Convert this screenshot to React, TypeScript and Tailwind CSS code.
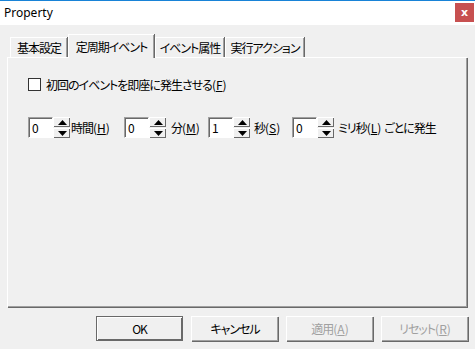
import type { ReactNode } from 'react';

// ── Classic Win32 pieces ─────────────────────────────────────────────────────

const jp = "[font-family:'Noto_Sans_CJK_JP','Noto_Sans',sans-serif] [font-feature-settings:'palt'] tracking-[-1px]";

// "(X)" accelerator part, Latin, normal spacing
function Acc({ k }: { k: string }) {
  return (
    <span className="tracking-normal">
      (<span className="underline">{k}</span>)
    </span>
  );
}

function Tab({ label, active, w }: { label: string; active?: boolean; w: string }) {
  if (active) {
    return (
      <div className={`relative z-10 -mb-[1px] flex h-[24px] items-center justify-center border-l border-t border-white bg-[#f0f0f0] shadow-[1px_0_0_#696969,inset_-1px_0_0_#a0a0a0] ${w}`}>
        <span className="text-[12px] leading-none text-black">{label}</span>
      </div>
    );
  }
  return (
    <div className={`flex h-[20px] items-center justify-center border-l border-t border-white bg-[#f0f0f0] shadow-[1px_0_0_#696969,inset_-1px_0_0_#a0a0a0] ${w}`}>
      <span className="text-[12px] leading-none text-black">{label}</span>
    </div>
  );
}

function Arrow({ up }: { up?: boolean }) {
  return (
    <svg width="9" height="5" viewBox="0 0 9 5" className="block">
      {up ? <path d="M0 5 L4.5 0 L9 5 Z" fill="#000" /> : <path d="M0 0 L4.5 5 L9 0 Z" fill="#000" />}
    </svg>
  );
}

function Spin({ value }: { value: string }) {
  return (
    <div className="flex h-[21px]">
      <div className="flex w-[25px] items-center border border-b-white border-l-[#a0a0a0] border-r-white border-t-[#a0a0a0] bg-white pl-[3px] shadow-[inset_1px_1px_0_#696969]">
        <span className="text-[12px] leading-none tracking-normal text-black">{value}</span>
      </div>
      <div className="flex w-[17px] flex-col">
        <div className="flex h-[10px] items-center justify-center border-l border-t border-white bg-[#f0f0f0] shadow-[inset_-1px_-1px_0_#696969]">
          <Arrow up />
        </div>
        <div className="h-[1px]" />
        <div className="flex h-[10px] items-center justify-center border-l border-t border-white bg-[#f0f0f0] shadow-[inset_-1px_-1px_0_#696969]">
          <Arrow />
        </div>
      </div>
    </div>
  );
}

function Btn({ children, primary, disabled }: { children: ReactNode; primary?: boolean; disabled?: boolean }) {
  return (
    <div
      className={
        primary
          ? 'flex h-[25px] w-[87px] items-center justify-center border border-[#696969] bg-[#f0f0f0] shadow-[inset_1px_1px_0_#fff,inset_-1px_-1px_0_#696969]'
          : 'flex h-[25px] w-[87px] items-center justify-center border-l border-t border-white bg-[#f0f0f0] shadow-[inset_-1px_-1px_0_#a0a0a0,1px_1px_0_#696969]'
      }
    >
      <span className={disabled ? 'text-[12px] leading-none text-[#a0a0a0]' : 'text-[12px] leading-none text-black'}>
        {children}
      </span>
    </div>
  );
}

export default function App() {
  return (
    <div className={`flex h-[349px] w-[475px] flex-col bg-[#f0f0f0] ${jp}`}>
      {/* Title bar */}
      <div className="flex h-[25px] shrink-0 items-start border-t border-[#1883d7] bg-white">
        <span className="mt-[5px] pl-[4px] text-[12px] leading-[14px] tracking-normal text-black [font-family:'Noto_Sans',sans-serif]">
          Property
        </span>
        <div className="ml-auto mr-[1px] mt-[2px] flex h-[19px] w-[19px] items-center justify-center bg-[#c75050]">
          <span className="text-[11px] font-bold leading-none tracking-normal text-white [font-family:'DejaVu_Sans',sans-serif]">x</span>
        </div>
      </div>

      {/* Tabs */}
      <div className="ml-[7px] mt-[9px] w-[460px]">
        <div className="flex items-end pl-[3px]">
          <Tab label="基本設定" w="w-[57px]" />
          <div className="w-[1px]" />
          <Tab label="定周期イベント" w="w-[86px]" active />
          <div className="w-[1px]" />
          <Tab label="イベント属性" w="w-[69px]" />
          <div className="w-[1px]" />
          <Tab label="実行アクション" w="w-[79px]" />
        </div>
        <div className="h-[250px] border-l border-t border-white shadow-[1px_1px_0_#696969,inset_-1px_-1px_0_#a0a0a0]">
          <div className="flex items-center pl-[20px] pt-[20px]">
            <div className="h-[13px] w-[13px] border border-[#333] bg-white" />
            <span className="ml-[5px] text-[12px] leading-none text-black">
              初回のイベントを即座に発生させる<Acc k="F" />
            </span>
          </div>
          <div className="mt-[26px] flex items-center pl-[20px] text-[12px] leading-none text-black">
            <Spin value="0" />
            <span className="w-[54px] pl-[1px]">
              時間<Acc k="H" />
            </span>
            <Spin value="0" />
            <span className="w-[42px] pl-[5px]">
              分<Acc k="M" />
            </span>
            <Spin value="1" />
            <span className="w-[42px] pl-[4px]">
              秒<Acc k="S" />
            </span>
            <Spin value="0" />
            <span className="pl-[4px]">
              ミリ秒<Acc k="L" /><span className="tracking-normal"> </span>ごとに発生
            </span>
          </div>
        </div>
      </div>

      {/* Buttons */}
      <div className="mt-[9px] flex justify-end gap-[8px] pr-[7px]">
        <Btn primary>OK</Btn>
        <Btn>キャンセル</Btn>
        <Btn disabled>
          適用<Acc k="A" />
        </Btn>
        <Btn disabled>
          リセット<Acc k="R" />
        </Btn>
      </div>
    </div>
  );
}
